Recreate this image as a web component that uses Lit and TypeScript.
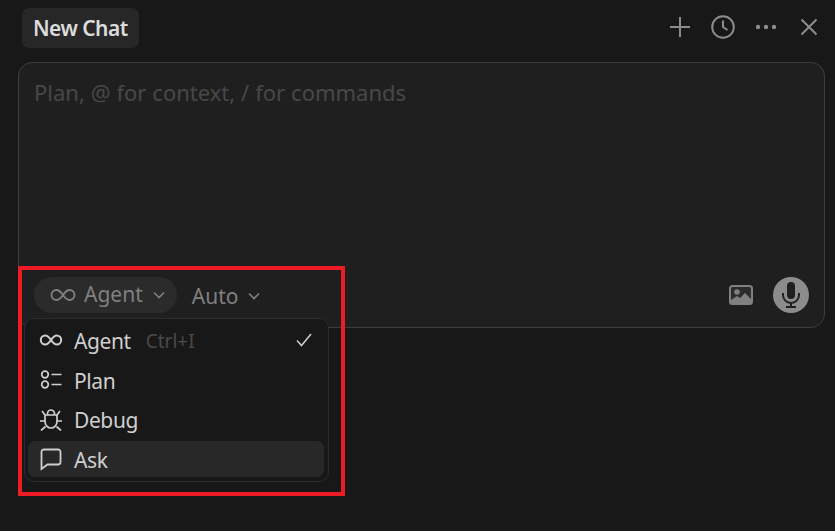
import { html, css, LitElement } from "lit";

const infinity = html`<svg viewBox="0 0 26 14" width="26" height="14" fill="none" stroke="currentColor" stroke-width="1.9"><path d="M13 7C10.5 3.4 9 2 6.5 2a5 5 0 0 0 0 10C9 12 10.5 10.6 13 7c2.5-3.6 4-5 6.500-5a5 5 0 0 1 0 10C17 12 15.500 10.600 13 7z"/></svg>`;
const chevron = html`<svg viewBox="0 0 14 8" width="14" height="8" fill="none" stroke="currentColor" stroke-width="1.600"><path d="M2 1.500l5 5 5-5"/></svg>`;

const menuItems = [
  {
    label: "Agent",
    hint: "Ctrl+I",
    checked: true,
    icon: html`<svg viewBox="0 0 24 24" width="24" height="24" fill="none" stroke="currentColor" stroke-width="2"><path d="M12 12C9.800 8.800 8.400 7.500 6.300 7.500a4.500 4.500 0 0 0 0 9c2.100 0 3.500-1.300 5.700-4.500 2.200-3.200 3.600-4.500 5.700-4.500a4.500 4.500 0 0 1 0 9c-2.100 0-3.500-1.300-5.700-4.500z"/></svg>`,
  },
  {
    label: "Plan",
    icon: html`<svg viewBox="0 0 24 24" width="24" height="24" fill="none" stroke="currentColor" stroke-width="1.700"><circle cx="6" cy="6.500" r="3.300"/><circle cx="6" cy="16.500" r="3.300"/><path d="M12.500 6.500h10M12.500 16.500h10"/></svg>`,
  },
  {
    label: "Debug",
    icon: html`<svg viewBox="0 -1 24 24" width="24" height="24" fill="none" stroke="currentColor" stroke-width="1.700"><path d="M6 7h12v6.500a6 6.500 0 0 1-12 0z"/><path d="M8.500 7V5.500a3.500 3.500 0 0 1 7 0V7M3 3l3 4M21 3l-3 4M1 13h5M18 13h5M2 22.500l4.500-4M22 22.500l-4.500-4"/></svg>`,
  },
  {
    label: "Ask",
    hovered: true,
    icon: html`<svg viewBox="0 0 24 24" width="24" height="24" fill="none" stroke="currentColor" stroke-width="1.800"><path d="M5 2.500h14a2.500 2.500 0 0 1 2.500 2.500v10a2.500 2.500 0 0 1-2.500 2.500H8.500l-6 4.500V5A2.500 2.500 0 0 1 5 2.500z"/></svg>`,
  },
];

export class AppRoot extends LitElement {
  override render() {
    return html`
      <div class="page">
        <header class="header">
          <div class="tab">New Chat</div>
          <div class="actions">
            <svg viewBox="0 0 22 22" width="22" height="22" fill="none" stroke="currentColor" stroke-width="2"><path d="M11 1v20M1 11h20"/></svg>
            <svg viewBox="0 0 24 24" width="24" height="24" fill="none" stroke="currentColor" stroke-width="2"><circle cx="12" cy="12" r="10.800"/><path d="M12 5.500V12l4.500 3"/></svg>
            <svg viewBox="0 0 22 6" width="22" height="6" fill="currentColor"><circle cx="3" cy="3" r="2.200"/><circle cx="11" cy="3" r="2.200"/><circle cx="19" cy="3" r="2.200"/></svg>
            <svg class="close" viewBox="0 0 18 18" width="18" height="18" fill="none" stroke="currentColor" stroke-width="2"><path d="M1.500 1.500l15 15M16.500 1.500l-15 15"/></svg>
          </div>
        </header>

        <section class="composer">
          <div class="placeholder">Plan, @ for context, / for commands</div>
          <div class="toolbar">
            <div class="mode">
              ${infinity}
              <span class="label">Agent</span>
              <span class="chev">${chevron}</span>
            </div>
            <div class="model">
              <span class="label">Auto</span>
              ${chevron}
            </div>
            <div class="spacer"></div>
            <svg class="image" viewBox="0 0 24 20" width="24" height="20">
              <rect x="1" y="1" width="22" height="18" rx="2.500" fill="#2c2c2c" stroke="#808080" stroke-width="2"/>
              <circle cx="8" cy="7" r="2.800" fill="#808080"/>
              <path d="M2 18v-3l6-4 3 2 5-5 6 6v4z" fill="#808080"/>
            </svg>
            <div class="mic">
              <svg viewBox="0 0 18 26" width="18" height="26" fill="none" stroke="#1f1f1f" stroke-width="2">
                <rect x="6" y="1" width="6" height="15" rx="3" fill="#1f1f1f"/>
                <path d="M1 11v2a8 8 0 0 0 16 0v-2M9 21v4M4 25h10"/>
              </svg>
            </div>
          </div>
        </section>

        <div class="menu">
          ${menuItems.map(
            (item) => html`
              <div class="row ${item.hovered ? "hovered" : ""}">
                <span class="icon">${item.icon}</span>
                <span class="label">${item.label}</span>
                ${item.hint ? html`<span class="hint">${item.hint}</span>` : ""}
                ${item.checked
                  ? html`<svg class="check" viewBox="0 0 16 14" width="16" height="14" fill="none" stroke="currentColor" stroke-width="1.500"><path d="M1 7.500l4.500 5L15 1"/></svg>`
                  : ""}
              </div>
            `
          )}
        </div>

        <div class="highlight"></div>
      </div>
    `;
  }

  static styles = css`
    :host {
      display: block;
    }

    .page {
      position: relative;
      box-sizing: border-box;
      width: 835px;
      height: 531px;
      padding: 8px 10px 0 18px;
      overflow: hidden;
      background: #181818;
      font-family: "Noto Sans", sans-serif;
      font-size: 21px;
    }

    .header {
      display: flex;
      align-items: center;
      justify-content: space-between;
      height: 40px;
      padding: 0 7px 0 4px;
      margin-bottom: 14px;
    }

    .tab {
      display: flex;
      align-items: center;
      height: 40px;
      padding: 0 11px;
      border-radius: 7px;
      background: #272727;
      color: #dcdcdc;
      font-size: 21px;
      font-weight: 600;
      letter-spacing: -0.55px;
    }

    .actions {
      display: flex;
      align-items: center;
      gap: 20px;
      padding-bottom: 2px;
      color: #8c8c8c;
    }

    .close {
      margin-left: 3px;
    }

    .composer {
      display: flex;
      flex-direction: column;
      justify-content: space-between;
      box-sizing: border-box;
      height: 266px;
      padding: 14px 15px 14px 15px;
      border: 1px solid #3d3d3d;
      border-radius: 14px;
      background: #1f1f1f;
    }

    .placeholder {
      color: #484848;
      font-size: 22px;
      word-spacing: 0.2px;
      line-height: 30px;
    }

    .toolbar {
      display: flex;
      align-items: center;
      height: 36px;
      color: #8c8c8c;
    }

    .mode {
      display: flex;
      align-items: center;
      height: 36px;
      padding: 0 11px 0 16px;
      gap: 8px;
      border-radius: 18px;
      background: #2b2b2b;
      color: #808080;
    }

    .mode .label {
      padding-bottom: 2px;
    }

    .chev {
      display: flex;
      margin-left: 1px;
    }

    .model {
      display: flex;
      align-items: center;
      gap: 9px;
      margin-left: 15px;
      padding-top: 1px;
      color: #808080;
    }

    .spacer {
      flex: 1;
    }

    .image {
      margin-right: 20px;
    }

    .mic {
      display: flex;
      align-items: center;
      justify-content: center;
      width: 36px;
      height: 36px;
      border-radius: 50%;
      background: #8c8c8c;
    }

    .menu {
      position: absolute;
      left: 24px;
      top: 318px;
      display: flex;
      flex-direction: column;
      gap: 3.500px;
      box-sizing: border-box;
      width: 305px;
      height: 164px;
      padding: 3px 4px 4px 3px;
      border: 1px solid #2c2c2c;
      border-radius: 10px;
      background: #181818;
      color: #cfcfcf;
    }

    .row {
      display: flex;
      align-items: center;
      height: 36px;
      flex: none;
      padding: 0 8px 0 11px;
      border-radius: 7px;
    }

    .row .label {
      padding-top: 2px;
      letter-spacing: -0.4px;
    }

    .row.hovered {
      background: #282828;
    }

    .icon {
      display: flex;
      width: 24px;
      margin-right: 11px;
    }

    .hint {
      margin-left: 15px;
      padding-top: 1px;
      color: #4a4a4a;
      font-size: 19px;
    }

    .check {
      margin-left: auto;
      margin-right: 4px;
    }

    .highlight {
      position: absolute;
      left: 18px;
      top: 266px;
      box-sizing: border-box;
      width: 327px;
      height: 230px;
      border: 4px solid #ed1c24;
    }
  `;
}

customElements.define("app-root", AppRoot);
